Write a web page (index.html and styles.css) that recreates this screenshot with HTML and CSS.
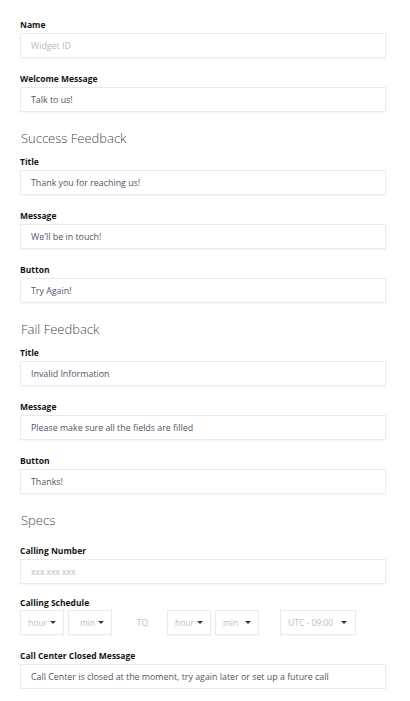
FILE: index.html
```html
<!DOCTYPE html>
<html>
<head>
<meta charset="utf-8">
<link rel="stylesheet" href="styles.css">
</head>
<body>
<div class="form">
  <div class="field">
    <div class="label">Name</div>
    <div class="input placeholder">Widget ID</div>
  </div>
  <div class="field">
    <div class="label">Welcome Message</div>
    <div class="input">Talk to us!</div>
  </div>

  <h2 class="heading">Success Feedback</h2>
  <div class="field">
    <div class="label">Title</div>
    <div class="input">Thank you for reaching us!</div>
  </div>
  <div class="field">
    <div class="label">Message</div>
    <div class="input">We'll be in touch!</div>
  </div>
  <div class="field">
    <div class="label">Button</div>
    <div class="input">Try Again!</div>
  </div>

  <h2 class="heading">Fail Feedback</h2>
  <div class="field">
    <div class="label">Title</div>
    <div class="input">Invalid Information</div>
  </div>
  <div class="field">
    <div class="label">Message</div>
    <div class="input">Please make sure all the fields are filled</div>
  </div>
  <div class="field">
    <div class="label">Button</div>
    <div class="input">Thanks!</div>
  </div>

  <h2 class="heading heading-wide">Specs</h2>
  <div class="field field-tight">
    <div class="label">Calling Number</div>
    <div class="input placeholder small">xxx xxx xxx</div>
  </div>
  <div class="field">
    <div class="label label-tight">Calling Schedule</div>
    <div class="schedule">
      <div class="sel"><span>hour</span><i class="caret"></i></div>
      <div class="sel sel-indent"><span>min</span><i class="caret"></i></div>
      <div class="to">TO</div>
      <div class="sel"><span>hour</span><i class="caret"></i></div>
      <div class="sel sel-gap"><span>min</span><i class="caret"></i></div>
      <div class="sel sel-wide"><span>UTC - 09:00</span><i class="caret"></i></div>
    </div>
  </div>
  <div class="field last">
    <div class="label">Call Center Closed Message</div>
    <div class="input">Call Center is closed at the moment, try again later or set up a future call</div>
  </div>
</div>
</body>
</html>
```

FILE: styles.css
```css
* { box-sizing: border-box; }
html, body { margin: 0; padding: 0; background: #ffffff; }
body {
  font-family: "Open Sans", "Noto Sans", sans-serif;
  overflow: hidden;
}
.form {
  padding: 19px 24px 0 20px;
}
.field {
  margin-bottom: 15px;
}
.field-tight { margin-bottom: 13px; }
.field.last { margin-bottom: 0; }
.label {
  font-size: 8.5px;
  font-weight: 700;
  line-height: 12px;
  color: #151515;
  margin-bottom: 2px;
}
.label-tight { margin-bottom: 1px; }
.input {
  height: 25px;
  border: 1px solid #ebebeb;
  box-shadow: 0 1px 1px rgba(0, 0, 0, 0.03);
  padding: 0 10px;
  display: flex;
  align-items: center;
  font-size: 8.85px;
  color: #4f5663;
  white-space: nowrap;
  overflow: hidden;
}
.placeholder { color: #b9b9b9; }
.small { font-size: 8.5px; }
.heading {
  margin: 0 0 7px 1px;
  font-size: 13px;
  font-weight: 300;
  line-height: 22px;
  color: #4a4a4a;
}
.heading-wide { margin-bottom: 14px; }
.schedule {
  display: flex;
  align-items: center;
}
.sel {
  width: 44px;
  height: 25px;
  border: 1px solid #ebebeb;
  box-shadow: 0 1px 1px rgba(0, 0, 0, 0.03);
  display: flex;
  align-items: center;
  padding: 0 7px 0 7px;
  font-size: 8.5px;
  color: #bcbcbc;
  margin-right: 4px;
  white-space: nowrap;
}
.sel-indent { padding-left: 11px; }
.sel-gap { margin-right: 21px; }
.sel-wide { width: 76px; margin-right: 0; padding-right: 8px; }
.caret {
  display: block;
  margin-left: auto;
  flex: none;
  width: 0;
  height: 0;
  border-left: 3px solid transparent;
  border-right: 3px solid transparent;
  border-top: 3.5px solid #3a3a3a;
}
.to {
  width: 51px;
  text-align: center;
  font-size: 8.5px;
  color: #bcbcbc;
  padding-left: 2px;
}
```
